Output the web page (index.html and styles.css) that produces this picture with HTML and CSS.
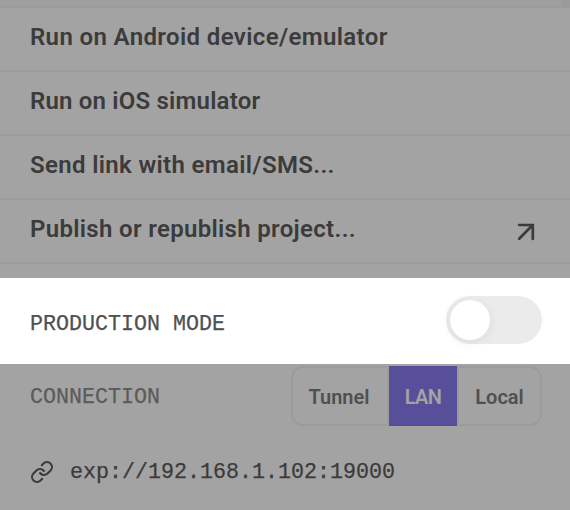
FILE: index.html
```html
<!DOCTYPE html>
<html lang="en">
<head>
<meta charset="utf-8">
<title>Project menu</title>
<link rel="stylesheet" href="styles.css">
</head>
<body>
<div class="top-strip"><div class="top-panel"></div></div>
<ul class="menu">
  <li class="menu-item"><span class="run-android">Run on Android device/emulator</span></li>
  <li class="menu-item"><span class="run-ios">Run on iOS simulator</span></li>
  <li class="menu-item"><span class="send-link">Send link with email/SMS...</span></li>
  <li class="menu-item"><span class="publish">Publish or republish project...</span>
    <svg class="arrow" width="18" height="18" viewBox="0 0 18 18"><path d="M2.2 2H15.8V16M15 2.8L2.2 15.8"/></svg>
  </li>
</ul>
<section class="production">
  <span class="label">PRODUCTION MODE</span>
  <div class="toggle"><div class="knob"></div></div>
</section>
<section class="connection">
  <span class="label">CONNECTION</span>
  <div class="segments">
    <div class="segment tunnel"><span>Tunnel</span></div>
    <div class="segment lan"><span>LAN</span></div>
    <div class="segment local"><span>Local</span></div>
  </div>
</section>
<section class="address">
  <svg class="link" width="24" height="24" viewBox="0 0 24 24"><path d="M10 13a5 5 0 0 0 7.54.54l3-3a5 5 0 0 0-7.07-7.07l-1.72 1.71"/><path d="M14 11a5 5 0 0 0-7.54-.54l-3 3a5 5 0 0 0 7.07 7.07l1.71-1.71"/></svg>
  <span class="label">exp://192.168.1.102:19000</span>
</section>
</body>
</html>
```
FILE: styles.css
```css
* { box-sizing: border-box; }
body {
  margin: 0;
  width: 570px;
  height: 510px;
  overflow: hidden;
  background: #a3a3a3;
  color: #3b3b3b;
  font-family: Roboto, "Liberation Sans", sans-serif;
}
.top-strip {
  height: 8px;
  background: #9b9b9b;
  border-bottom: 2px solid #9b9b9b;
}
.top-panel { width: 562px; height: 6px; background: #9f9f9f; }
.menu { margin: 0; padding: 0; list-style: none; }
.menu-item {
  display: flex;
  align-items: center;
  justify-content: space-between;
  height: 64px;
  padding: 0 35px 4px 30px;
  border-bottom: 2px solid #9b9b9b;
  font-size: 24px;
  font-weight: 600;
  line-height: 28px;
  white-space: nowrap;
}
.run-android { letter-spacing: 0.37px; }
.run-ios { letter-spacing: 0.2px; }
.send-link { letter-spacing: 0.35px; }
.publish { letter-spacing: 0.32px; }
.arrow {
  margin-top: 6px;
  fill: none;
  stroke: #3b3b3b;
  stroke-width: 2.7;
  stroke-linecap: round;
}
.label {
  font-family: "Liberation Mono", monospace;
  font-size: 21.667px;
  line-height: 26px;
  white-space: pre;
  -webkit-text-stroke: 0.25px currentColor;
}
.production {
  display: flex;
  align-items: center;
  justify-content: space-between;
  height: 86px;
  margin-top: 14px;
  padding: 0 28px 2px 30px;
  background: #fff;
  color: #505050;
}
.production .label { margin-top: 9px; }
.toggle {
  width: 96px;
  height: 48px;
  padding: 4px;
  border-radius: 24px;
  background: #ebebeb;
}
.knob {
  width: 40px;
  height: 40px;
  border-radius: 50%;
  background: #fff;
  box-shadow: 0 2px 12px rgba(0, 0, 0, 0.07);
}
.connection {
  display: flex;
  align-items: center;
  justify-content: space-between;
  height: 64px;
  padding: 0 28px 0 30px;
  color: #5b5b5b;
}
.connection .label { margin-top: 3px; }
.segments {
  display: flex;
  width: 251px;
  height: 60px;
}
.segment {
  display: flex;
  align-items: center;
  justify-content: center;
  border: 2px solid #9b9b9b;
  color: #505050;
  font-size: 20px;
  font-weight: 600;
  padding-top: 2px;
}
.tunnel { width: 98px; padding-right: 2px; border-radius: 12px 0 0 12px; }
.lan { width: 68px; background: #574f9a; border-color: #574f9a; color: #a3a3a3; letter-spacing: -0.6px; }
.local { width: 85px; border-radius: 0 12px 12px 0; }
.address {
  display: flex;
  align-items: center;
  gap: 16px;
  height: 82px;
  padding: 6px 0 0 30px;
}
.address .label { margin-top: 1px; }
.link {
  margin-bottom: 1px;
  fill: none;
  stroke: #3b3b3b;
  stroke-width: 2.1;
  stroke-linecap: round;
  stroke-linejoin: round;
}
```
